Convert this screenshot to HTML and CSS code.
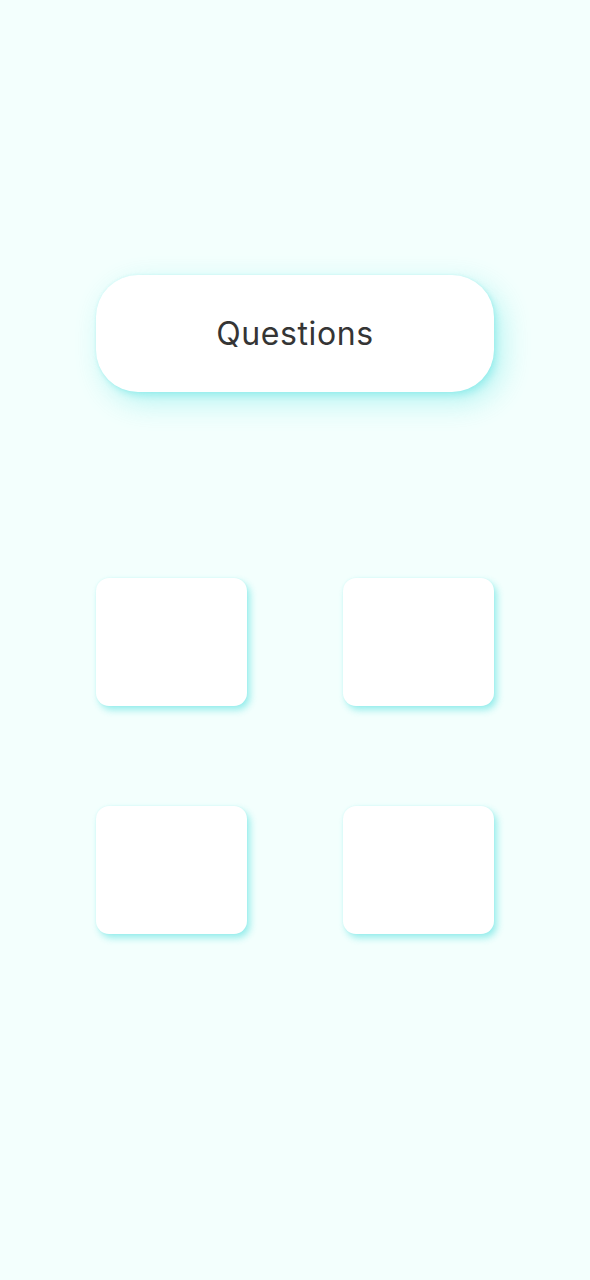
FILE: index.html
```html
<!DOCTYPE html>
<html>
<head>
<meta charset="utf-8">
<link rel="stylesheet" href="styles.css">
</head>
<body>
<main class="page">
  <div class="pill">Questions</div>
  <div class="grid">
    <div class="tile"></div>
    <div class="tile"></div>
    <div class="tile"></div>
    <div class="tile"></div>
  </div>
</main>
</body>
</html>
```
FILE: styles.css
```css
html, body {
  margin: 0;
  padding: 0;
  background: #f3fffd;
}
body {
  height: 1280px;
  font-family: Inter, "Noto Sans", sans-serif;
}
.page {
  width: 398px;
  margin: 0 auto;
  padding-top: 275px;
}
.pill {
  height: 117px;
  border-radius: 42px;
  background: #ffffff;
  display: flex;
  align-items: center;
  justify-content: center;
  font-size: 32px;
  font-weight: 400;
  color: #353535;
  letter-spacing: 0.6px;
  box-shadow: 8px 10px 28px rgba(40, 220, 220, 0.3), 3px 4px 6px rgba(60, 220, 220, 0.25), 0 0 3px rgba(120, 230, 230, 0.25);
}
.grid {
  margin-top: 186px;
  display: grid;
  grid-template-columns: 151px 151px;
  justify-content: space-between;
  row-gap: 100px;
}
.tile {
  height: 128px;
  border-radius: 13px;
  background: #ffffff;
  box-shadow: 3px 4px 7px rgba(40, 215, 215, 0.45), 0 0 2px rgba(120, 230, 230, 0.2);
}
```
